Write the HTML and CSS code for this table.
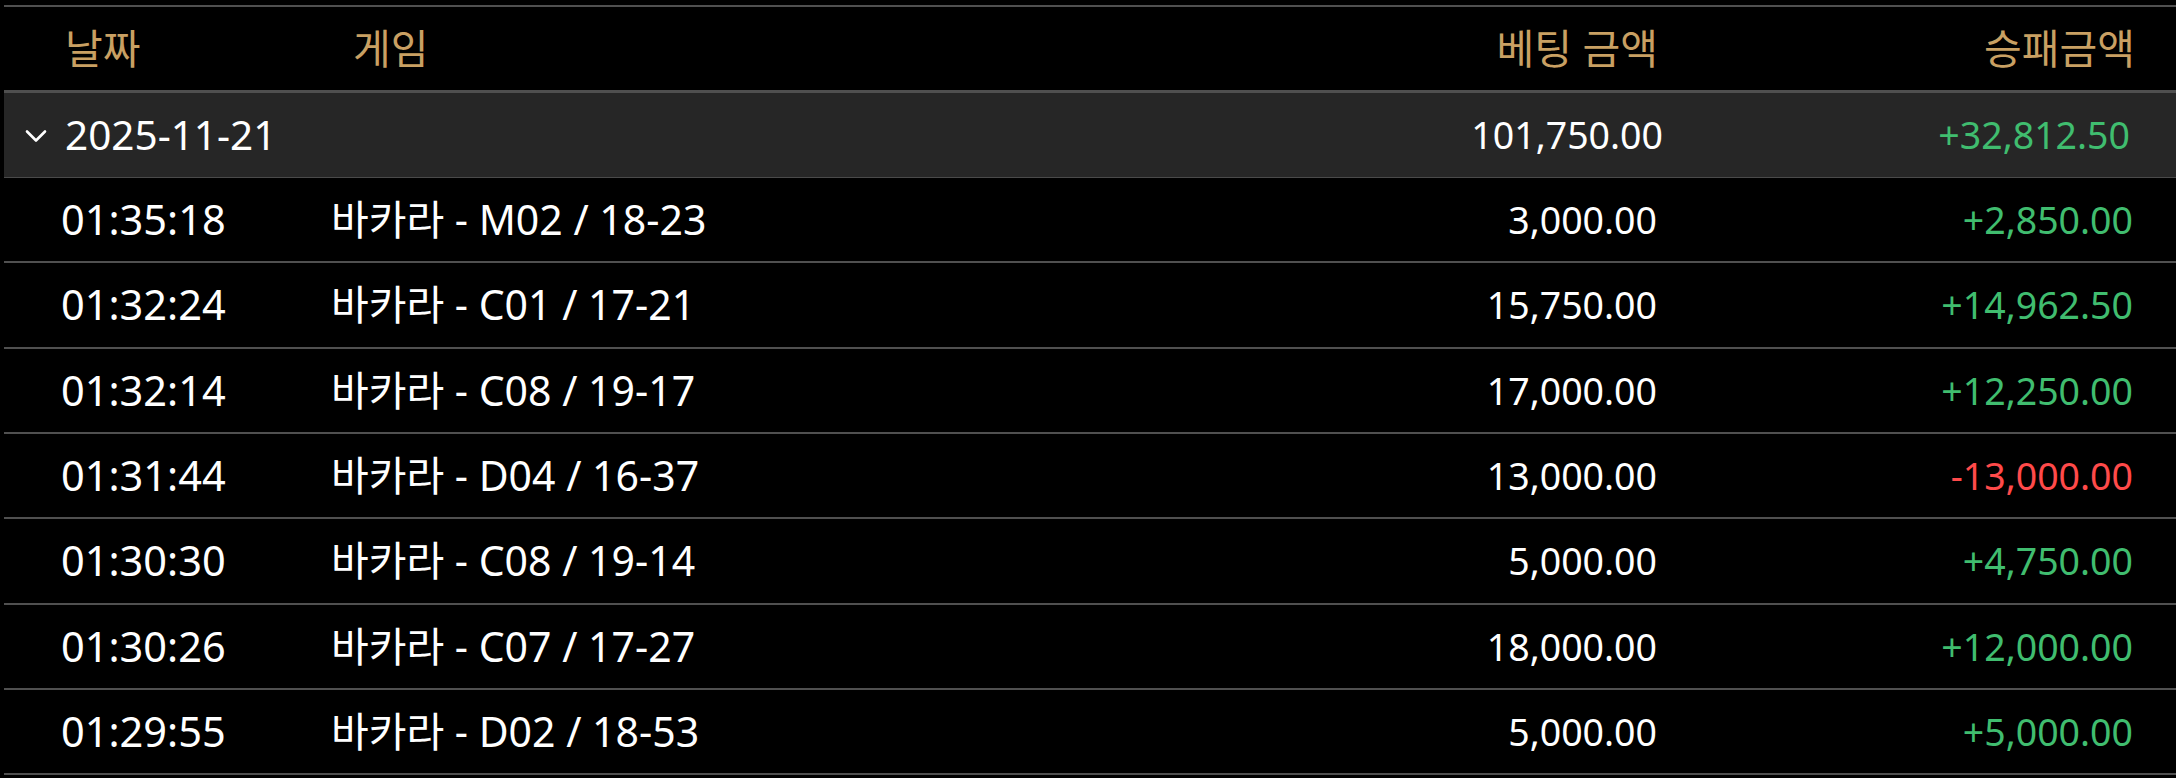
FILE: index.html
```html
<!DOCTYPE html>
<html lang="ko">
<head>
<meta charset="utf-8">
<link rel="stylesheet" href="styles.css">
</head>
<body>
<div class="table">
  <div class="row head">
    <div class="c c-date">날짜</div>
    <div class="c c-game">게임</div>
    <div class="c c-bet">베팅 금액</div>
    <div class="c c-win">승패금액</div>
  </div>
  <div class="row group">
    <div class="c c-date">
      <svg class="chev" width="22" height="14" viewBox="0 0 22 14"><path d="M2 2.5 L11 11.5 L20 2.5" fill="none" stroke="#fff" stroke-width="2.6" stroke-linecap="round" stroke-linejoin="round"/></svg>
      <span>2025-11-21</span>
    </div>
    <div class="c c-game"></div>
    <div class="c c-bet">101,750.00</div>
    <div class="c c-win pos">+32,812.50</div>
  </div>
  <div class="row item">
    <div class="c c-date">01:35:18</div>
    <div class="c c-game">바카라 - M02 / 18-23</div>
    <div class="c c-bet">3,000.00</div>
    <div class="c c-win pos">+2,850.00</div>
  </div>
  <div class="row item">
    <div class="c c-date">01:32:24</div>
    <div class="c c-game">바카라 - C01 / 17-21</div>
    <div class="c c-bet">15,750.00</div>
    <div class="c c-win pos">+14,962.50</div>
  </div>
  <div class="row item">
    <div class="c c-date">01:32:14</div>
    <div class="c c-game">바카라 - C08 / 19-17</div>
    <div class="c c-bet">17,000.00</div>
    <div class="c c-win pos">+12,250.00</div>
  </div>
  <div class="row item">
    <div class="c c-date">01:31:44</div>
    <div class="c c-game">바카라 - D04 / 16-37</div>
    <div class="c c-bet">13,000.00</div>
    <div class="c c-win neg">-13,000.00</div>
  </div>
  <div class="row item">
    <div class="c c-date">01:30:30</div>
    <div class="c c-game">바카라 - C08 / 19-14</div>
    <div class="c c-bet">5,000.00</div>
    <div class="c c-win pos">+4,750.00</div>
  </div>
  <div class="row item">
    <div class="c c-date">01:30:26</div>
    <div class="c c-game">바카라 - C07 / 17-27</div>
    <div class="c c-bet">18,000.00</div>
    <div class="c c-win pos">+12,000.00</div>
  </div>
  <div class="row item">
    <div class="c c-date">01:29:55</div>
    <div class="c c-game">바카라 - D02 / 18-53</div>
    <div class="c c-bet">5,000.00</div>
    <div class="c c-win pos">+5,000.00</div>
  </div>
</div>
</body>
</html>
```

FILE: styles.css
```css
* { box-sizing: border-box; }
html, body {
  margin: 0;
  padding: 0;
  background: #000;
  height: 778px;
  overflow: hidden;
}
body {
  padding: 5px 0 0 4px;
  font-family: "Noto Sans", "Noto Sans CJK KR", sans-serif;
  font-size: 42px;
  color: #fff;
}
.table {
  border-top: 2px solid #505050;
}
.row {
  display: grid;
  grid-template-columns: 270px 1fr 400px 476px;
  align-items: center;
  padding: 0 43px 0 57px;
  line-height: 1;
  white-space: nowrap;
}
.c-bet, .c-win { text-align: right; }

.head {
  height: 86px;
  border-bottom: 3px solid #4f4f4f;
  color: #c9a063;
  font-size: 41px;
  grid-template-columns: 270px 1fr 400px 477px;
  padding-right: 41px;
}
.head .c-date { padding-left: 4px; }
.head .c-game { padding-left: 22px; }

.group {
  height: 85px;
  background: #262626;
  border-bottom: 1px solid #4a4a4a;
  grid-template-columns: 303px 1fr 400px 467px;
  padding: 0 46px 0 21px;
}
.group .c-date {
  display: flex;
  align-items: center;
  gap: 18px;
  font-size: 40.5px;
}
.chev { display: block; flex: none; margin-top: 2px; }

.item {
  height: 85.33px;
  border-bottom: 2px solid #505050;
}
.item .c-date { font-size: 41.5px; }
.item .c-game { font-size: 41px; }
.item .c-bet, .item .c-win,
.group .c-bet, .group .c-win { font-size: 37.5px; }
.pos { color: #40bd6f; }
.neg { color: #ff4a4a; }
```
